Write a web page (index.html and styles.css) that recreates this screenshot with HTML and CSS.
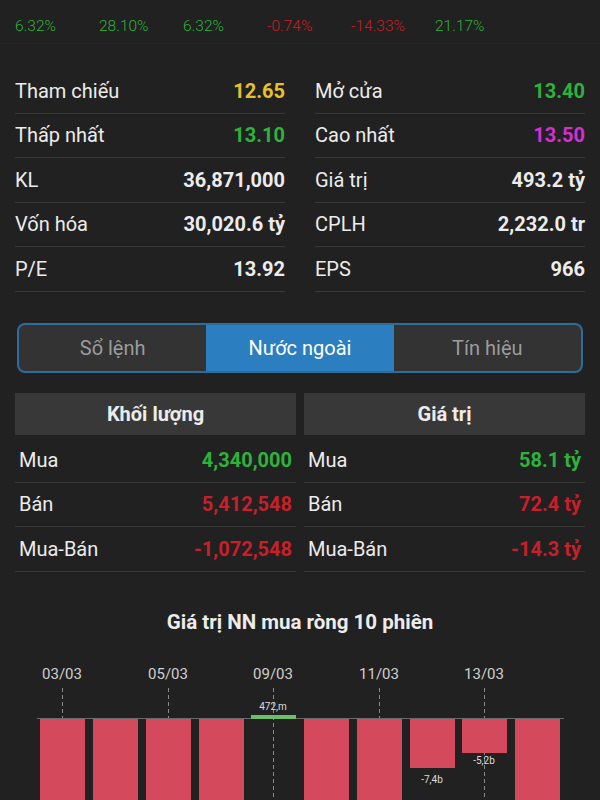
FILE: index.html
```html
<!DOCTYPE html>
<html lang="vi">
<head>
    <meta charset="UTF-8">
    <meta name="viewport" content="width=device-width, initial-scale=1.0">
    <title>Chi tiết mã</title>
    <link rel="stylesheet" href="styles.css">
</head>
<body>
    <div class="ticks">
        <span class="up">6.32%</span>
        <span class="up">28.10%</span>
        <span class="up">6.32%</span>
        <span class="down">-0.74%</span>
        <span class="down">-14.33%</span>
        <span class="up">21.17%</span>
    </div>

    <section class="stats">
        <div class="stat-col">
            <div class="row"><span>Tham chiếu</span><b class="ref">12.65</b></div>
            <div class="row"><span>Thấp nhất</span><b class="up">13.10</b></div>
            <div class="row"><span>KL</span><b>36,871,000</b></div>
            <div class="row"><span>Vốn hóa</span><b>30,020.6 tỷ</b></div>
            <div class="row"><span>P/E</span><b>13.92</b></div>
        </div>
        <div class="stat-col">
            <div class="row"><span>Mở cửa</span><b class="up">13.40</b></div>
            <div class="row"><span>Cao nhất</span><b class="ceil">13.50</b></div>
            <div class="row"><span>Giá trị</span><b>493.2 tỷ</b></div>
            <div class="row"><span>CPLH</span><b>2,232.0 tr</b></div>
            <div class="row"><span>EPS</span><b>966</b></div>
        </div>
    </section>

    <nav class="tabs">
        <a href="#">Sổ lệnh</a>
        <a href="#" class="active">Nước ngoài</a>
        <a href="#">Tín hiệu</a>
    </nav>

    <section class="foreign">
        <div class="f-col">
            <h3>Khối lượng</h3>
            <div class="row"><span>Mua</span><b class="up">4,340,000</b></div>
            <div class="row"><span>Bán</span><b class="down">5,412,548</b></div>
            <div class="row"><span>Mua-Bán</span><b class="down">-1,072,548</b></div>
        </div>
        <div class="f-col">
            <h3>Giá trị</h3>
            <div class="row"><span>Mua</span><b class="up">58.1 tỷ</b></div>
            <div class="row"><span>Bán</span><b class="down">72.4 tỷ</b></div>
            <div class="row"><span>Mua-Bán</span><b class="down">-14.3 tỷ</b></div>
        </div>
    </section>

    <section class="chart">
        <h2>Giá trị NN mua ròng 10 phiên</h2>
        <svg class="bars" width="600" height="150" viewBox="0 0 600 150">
            <g class="dates">
                <text x="62" y="28">03/03</text>
                <text x="168" y="28">05/03</text>
                <text x="273" y="28">09/03</text>
                <text x="379" y="28">11/03</text>
                <text x="484" y="28">13/03</text>
            </g>
            <g class="grid">
                <line x1="62.5" y1="37" x2="62.5" y2="150"/>
                <line x1="168.5" y1="37" x2="168.5" y2="150"/>
                <line x1="273.5" y1="37" x2="273.5" y2="150"/>
                <line x1="379.5" y1="37" x2="379.5" y2="150"/>
                <line x1="484.5" y1="37" x2="484.5" y2="150"/>
            </g>
            <line class="axis" x1="37" y1="67.5" x2="564" y2="67.5"/>
            <g class="neg">
                <rect x="40" y="68" width="45" height="82"/>
                <rect x="93" y="68" width="45" height="82"/>
                <rect x="146" y="68" width="45" height="82"/>
                <rect x="199" y="68" width="45" height="82"/>
                <rect x="304" y="68" width="45" height="82"/>
                <rect x="357" y="68" width="45" height="82"/>
                <rect x="410" y="68" width="45" height="49"/>
                <rect x="462" y="68" width="45" height="34"/>
                <rect x="515" y="68" width="45" height="82"/>
            </g>
            <rect class="pos" x="251" y="64" width="45" height="4"/>
            <g class="vals">
                <text x="273" y="59">472,m</text>
                <text x="432" y="132">-7,4b</text>
                <text x="484" y="113">-5,2b</text>
            </g>
        </svg>
    </section>
</body>
</html>
```

FILE: styles.css
```css
body {
    margin: 0;
    background-color: #212121;
    color: #ececec;
    font-family: Roboto, "Noto Sans", sans-serif;
    width: 600px;
    height: 800px;
    overflow: hidden;
}
.up {
    color: #2eb23c;
}
.down {
    color: #c81f2a;
}
.ref {
    color: #e6c12b;
}
.ceil {
    color: #d42fd4;
}
.ticks {
    display: grid;
    grid-template-columns: repeat(6, 84px);
    padding: 17px 15px 0;
    height: 26px;
    font-size: 15.5px;
    font-weight: 300;
    border-bottom: 1px solid #262626;
}
.stats {
    display: grid;
    grid-template-columns: 270px 270px;
    column-gap: 30px;
    padding: 25px 15px 0;
}
.row {
    display: flex;
    justify-content: space-between;
    align-items: center;
    height: 43.5px;
    border-bottom: 1px solid #383838;
    font-size: 20px;
}
.row b {
    font-weight: 700;
}
.tabs {
    display: flex;
    margin: 31.5px 17px 0 17px;
    height: 46px;
    border: 2px solid #2e6c9b;
    border-radius: 8px;
    overflow: hidden;
    background-color: #333;
}
.tabs a {
    flex: 1;
    display: flex;
    align-items: center;
    justify-content: center;
    color: #9c9c9c;
    text-decoration: none;
    font-size: 20px;
}
.tabs a.active {
    background-color: #2b7fc0;
    color: #fff;
}
.foreign {
    display: grid;
    grid-template-columns: 281px 281px;
    column-gap: 8px;
    padding: 20px 15px 0;
}
.foreign h3 {
    margin: 0 0 3px;
    height: 42px;
    line-height: 42px;
    text-align: center;
    background-color: #383838;
    font-size: 20px;
    font-weight: 700;
}
.foreign .row {
    padding: 0 4px;
}
.chart h2 {
    margin: 37px 0 15px;
    text-align: center;
    font-size: 20.5px;
    font-weight: 700;
    line-height: 27px;
    height: 27px;
}
.bars {
    display: block;
}
.dates text {
    fill: #cfcfcf;
    font-size: 15px;
    text-anchor: middle;
    font-family: Roboto, sans-serif;
}
.grid line {
    stroke: #8a8a8a;
    stroke-width: 1;
    stroke-dasharray: 4 3;
}
.axis {
    stroke: #6a6a6a;
    stroke-width: 1;
}
.neg rect {
    fill: #d44a5c;
}
.pos {
    fill: #6cbd68;
}
.vals text {
    fill: #dcdcdc;
    font-size: 10px;
    text-anchor: middle;
    font-family: Roboto, sans-serif;
}
```
